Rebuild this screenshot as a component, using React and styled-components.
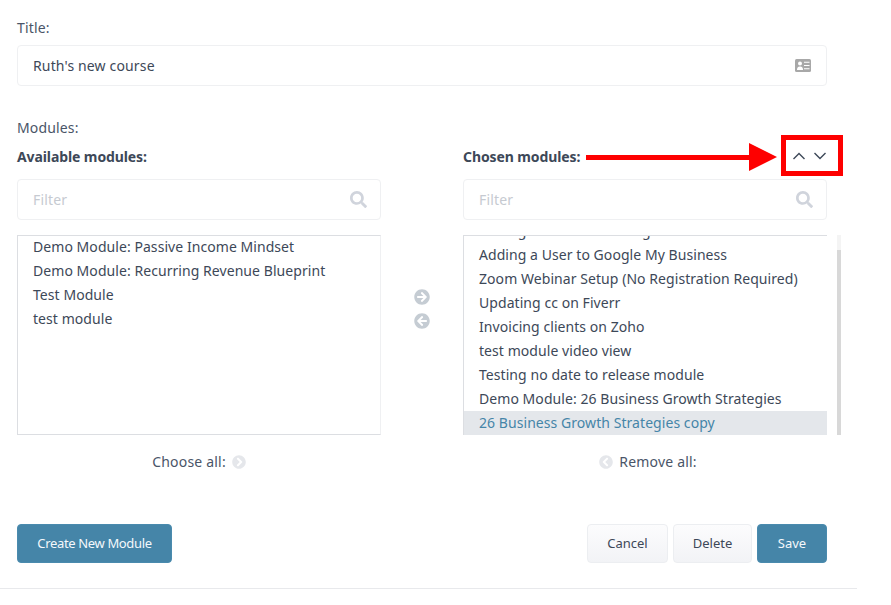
import React from "react";
import styled, { createGlobalStyle } from "styled-components";
import { FaArrowCircleLeft, FaArrowCircleRight, FaChevronCircleLeft, FaChevronCircleRight, FaSearch } from "react-icons/fa";

const GlobalStyle = createGlobalStyle`
  html, body {
    margin: 0;
    background: #fff;
  }
  body {
    font-family: "Noto Sans", "Open Sans", sans-serif;
    font-size: 14px;
    line-height: 24px;
    color: #3d4852;
  }
`;

const Page = styled.div`
  position: relative;
  width: 857px;
  height: 589px;
  box-sizing: border-box;
  padding: 16px 30px 0 17px;
  border-bottom: 1px solid #e8e9ec;
`;

const Label = styled.div`
  height: 24px;
  color: #4a5568;
  letter-spacing: 0.15px;
`;

const InputBox = styled.div`
  display: flex;
  align-items: center;
  justify-content: space-between;
  height: 41px;
  box-sizing: border-box;
  padding: 0 ${(p) => (p.$placeholder ? 13 : 15)}px 0 15px;
  background: #fff;
  border: 1px solid #eff0f2;
  border-radius: 4px;
  letter-spacing: 0.15px;
  color: ${(p) => (p.$placeholder ? "#c6cad1" : "#3d4858")};
  svg {
    color: #d0d4dc;
    font-size: 17px;
  }
`;

const TitleField = styled.div`
  margin-top: 5px;
  margin-bottom: 30px;
`;

const Columns = styled.div`
  display: grid;
  grid-template-columns: 364px 82px 364px;
  margin-top: 5px;
`;

const Column = styled.div`
  display: flex;
  flex-direction: column;
  min-width: 0;
`;

const ColumnTitle = styled.div`
  font-weight: 700;
  height: 24px;
  margin-bottom: 10px;
  letter-spacing: -0.1px;
  color: #3d4858;
`;

const ListBox = styled.div`
  position: relative;
  display: flex;
  flex-direction: column;
  justify-content: ${(p) => (p.$bottom ? "flex-end" : "flex-start")};
  height: 200px;
  box-sizing: border-box;
  margin-top: 15px;
  overflow: hidden;
  border-top: 1px solid #dcdee2;
  border-left: 1px solid #dcdee2;
  border-bottom: ${(p) => (p.$bottom ? "none" : "1px solid #dcdee2")};
  border-right: ${(p) => (p.$bottom ? "none" : "1px solid #eff0f2")};
  ${(p) => (p.$bottom ? "" : "& > :first-child { margin-top: -1px; }")}
`;

const ListRow = styled.div`
  flex: none;
  height: 24px;
  padding-left: 15px;
  white-space: nowrap;
  letter-spacing: 0.06px;
  color: ${(p) => (p.$selected ? "#4585a8" : "#3d4858")};
  background: ${(p) => (p.$selected ? "#e4e7eb" : "transparent")};
`;

const Mover = styled.div`
  display: flex;
  flex-direction: column;
  align-items: center;
  gap: 8px;
  margin-top: 144px;
  color: #c5ccd3;
  font-size: 16px;
  svg {
    display: block;
  }
`;

const BulkAction = styled.div`
  display: flex;
  align-items: center;
  justify-content: center;
  gap: 6px;
  height: 24px;
  margin-top: 15px;
  padding-left: ${(p) => p.$indent || 0}px;
  letter-spacing: 0.2px;
  color: #4a5568;
  svg {
    color: #e5e7eb;
    font-size: 14px;
  }
`;

const ScrollTrack = styled.div`
  position: absolute;
  left: 837px;
  top: 235px;
  width: 4px;
  height: 200px;
  background: #f4f4f4;
`;

const ScrollThumb = styled.div`
  height: 185px;
  margin-top: 15px;
  background: #d8d8d8;
`;

const Actions = styled.div`
  display: flex;
  align-items: center;
  justify-content: space-between;
  margin-top: 50px;
`;

const ButtonGroup = styled.div`
  display: flex;
  gap: 5px;
`;

const Button = styled.div`
  display: flex;
  align-items: center;
  justify-content: center;
  width: ${(p) => p.$width}px;
  height: 39px;
  box-sizing: border-box;
  padding-bottom: 2px;
  font-size: 13px;
  letter-spacing: ${(p) => p.$spacing || 0}px;
  border-radius: 4px;
  color: ${(p) => (p.$primary ? "#f4f8fb" : "#3d4858")};
  background: ${(p) => (p.$primary ? "#4585a8" : "linear-gradient(#fcfcfd, #f2f3f6)")};
  border: 1px solid ${(p) => (p.$primary ? "#4a8bae" : "#eceef1")};
`;

const Highlight = styled.div`
  position: absolute;
  left: 781px;
  top: 135px;
  width: 62px;
  height: 41px;
  box-sizing: border-box;
  border: 5px solid #fe0000;
  padding-right: 5px;
  display: flex;
  align-items: center;
  justify-content: center;
  gap: 9px;
  svg {
    display: block;
  }
`;

const Annotation = styled.svg`
  position: absolute;
  left: 586px;
  top: 143px;
`;

const Chevron = ({ d }) => (
  <svg width="12" height="8" viewBox="0 0 12 8" fill="none" stroke="#3d4858" strokeWidth="1.4">
    <path d={d} />
  </svg>
);

// solid contact card: white person on the left, three white lines on the right
const CardIcon = () => (
  <svg width="16" height="13" viewBox="0 0 16 13">
    <rect width="16" height="13" rx="1.5" fill="#a8a8a8" />
    <circle cx="5" cy="4.6" r="2" fill="#fff" />
    <path d="M2 11 C2 8 3.4 7.4 5 7.4 C6.6 7.4 8 8 8 11 Z" fill="#fff" />
    <path d="M9 3.2 H14.5 M9 6.5 H14.5 M9 9.8 H14.5" stroke="#fff" strokeWidth="1.1" />
  </svg>
);

const available = [
  "Demo Module: Passive Income Mindset",
  "Demo Module: Recurring Revenue Blueprint",
  "Test Module",
  "test module",
];

const chosen = [
  "Adding a User to SMS Page",
  "Adding a User to Google My Business",
  "Zoom Webinar Setup (No Registration Required)",
  "Updating cc on Fiverr",
  "Invoicing clients on Zoho",
  "test module video view",
  "Testing no date to release module",
  "Demo Module: 26 Business Growth Strategies",
  "26 Business Growth Strategies copy",
];

const App = () => (
  <Page>
    <GlobalStyle />
    <Label>Title:</Label>
    <TitleField>
      <InputBox>
        Ruth's new course
        <CardIcon />
      </InputBox>
    </TitleField>
    <Label>Modules:</Label>
    <Columns>
      <Column>
        <ColumnTitle>Available modules:</ColumnTitle>
        <InputBox $placeholder>
          Filter
          <FaSearch />
        </InputBox>
        <ListBox>
          {available.map((name) => (
            <ListRow key={name}>{name}</ListRow>
          ))}
        </ListBox>
        <BulkAction>
          Choose all: <FaChevronCircleRight />
        </BulkAction>
      </Column>
      <Mover>
        <FaArrowCircleRight />
        <FaArrowCircleLeft />
      </Mover>
      <Column>
        <ColumnTitle>Chosen modules:</ColumnTitle>
        <InputBox $placeholder>
          Filter
          <FaSearch />
        </InputBox>
        <ListBox $bottom>
          {chosen.map((name, i) => (
            <ListRow key={name} $selected={i === chosen.length - 1}>
              {name}
            </ListRow>
          ))}
        </ListBox>
        <BulkAction $indent={6}>
          <FaChevronCircleLeft /> Remove all:
        </BulkAction>
      </Column>
    </Columns>
    <ScrollTrack>
      <ScrollThumb />
    </ScrollTrack>
    <Actions>
      <Button $primary $width={155} $spacing={-0.35}>Create New Module</Button>
      <ButtonGroup>
        <Button $width={81}>Cancel</Button>
        <Button $width={79}>Delete</Button>
        <Button $primary $width={70}>Save</Button>
      </ButtonGroup>
    </Actions>
    <Annotation width="192" height="28" viewBox="0 0 192 28">
      <rect x="0" y="12" width="165" height="5" fill="#fe0000" />
      <polygon points="163,0 191,14 163,28" fill="#fe0000" />
    </Annotation>
    <Highlight>
      <Chevron d="M0.5 7 L6 1.5 L11.5 7" />
      <Chevron d="M0.5 1 L6 6.5 L11.5 1" />
    </Highlight>
  </Page>
);

export default App;
